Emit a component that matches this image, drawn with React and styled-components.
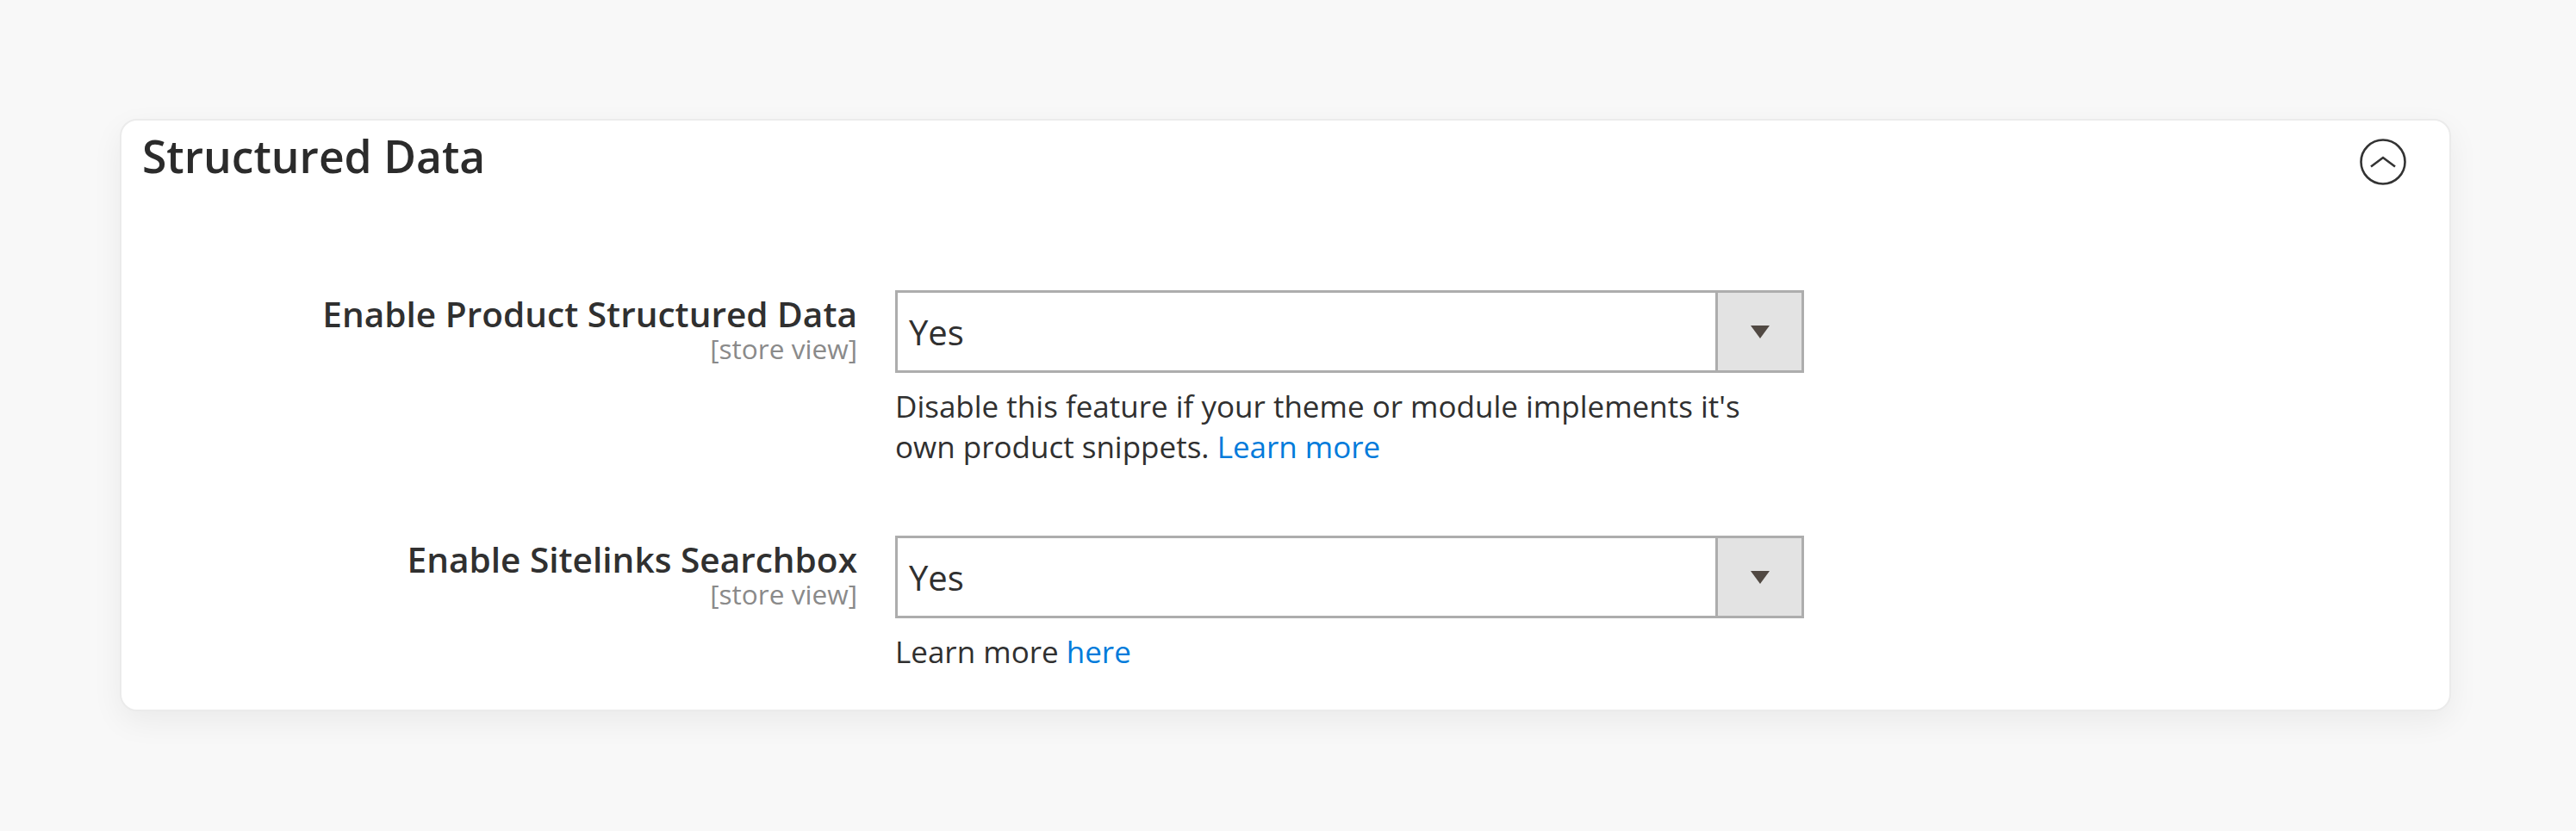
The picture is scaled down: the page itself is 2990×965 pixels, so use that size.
import styled, { createGlobalStyle } from 'styled-components';

const GlobalStyle = createGlobalStyle`
  html, body {
    margin: 0;
    padding: 0;
    background: #f8f8f8;
    font-family: "Open Sans", "Liberation Sans", sans-serif;
    color: #303030;
  }
`;

const Page = styled.div`
  width: 2990px;
  height: 965px;
  box-sizing: border-box;
  padding: 138px 0 0 139px;
`;

const Card = styled.section`
  width: 2706px;
  box-sizing: border-box;
  background: #fff;
  border: 2px solid #ebebeb;
  border-radius: 20px;
  box-shadow: 0 12px 36px rgba(0, 0, 0, 0.06);
  padding-bottom: 44px;
`;

const Header = styled.div`
  display: flex;
  justify-content: space-between;
  align-items: flex-start;
  padding: 12px 50px 0 24px;
`;

const Title = styled.h2`
  margin: 0;
  font-size: 51.6px;
  line-height: 59px;
  font-weight: 600;
  color: #2b2b2b;
`;

const ToggleButton = styled.button`
  margin-top: 9px;
  width: 54px;
  height: 54px;
  padding: 0;
  border: 0;
  background: none;
  display: flex;
  align-items: center;
  justify-content: center;
`;

const Form = styled.div`
  display: grid;
  grid-template-columns: 854px 1055px;
  column-gap: 44px;
  row-gap: 80px;
  padding-top: 122px;
`;

const Label = styled.div`
  text-align: right;
  padding-top: 4px;
`;

const LabelText = styled.div`
  font-size: 40.6px;
  line-height: 48px;
  font-weight: 600;
  color: #303030;
`;

const Scope = styled.div`
  font-size: 31.6px;
  line-height: 36px;
  color: #8a8a8a;
  margin-top: -2px;
`;

const Control = styled.div`
  display: flex;
  flex-direction: column;
`;

const Select = styled.div`
  display: flex;
  height: 96px;
  box-sizing: border-box;
  border: 3px solid #adadad;
  background: #fff;
`;

const Value = styled.div`
  flex: 1;
  display: flex;
  align-items: center;
  padding-left: 13px;
  font-size: 40px;
  color: #303030;
`;

const Arrow = styled.div`
  width: 97px;
  border-left: 3px solid #adadad;
  background: #e3e3e3;
  display: flex;
  align-items: center;
  justify-content: center;

  &::after {
    content: '';
    width: 0;
    height: 0;
    border-left: 11px solid transparent;
    border-right: 11px solid transparent;
    border-top: 15px solid #514943;
  }
`;

const Note = styled.p`
  margin: 15px 0 0;
  font-size: 35px;
  line-height: 47px;
  color: #303030;
`;

const Link = styled.a`
  color: #007bdb;
  text-decoration: none;
`;

const fields = [
  {
    label: 'Enable Product Structured Data',
    note: (
      <>
        Disable this feature if your theme or module implements it's own product snippets.{' '}
        <Link href="#">Learn more</Link>
      </>
    ),
  },
  {
    label: 'Enable Sitelinks Searchbox',
    note: (
      <>
        Learn more <Link href="#">here</Link>
      </>
    ),
  },
];

const App = () => {
  return (
    <Page>
      <GlobalStyle />
      <Card>
        <Header>
          <Title>Structured Data</Title>
          <ToggleButton aria-label="Collapse">
            <svg width="54" height="54" viewBox="0 0 54 54" fill="none">
              <circle cx="27" cy="27" r="25.5" stroke="#333" strokeWidth="2.6" />
              <polyline
                points="13,32.5 27,22 41,32.5"
                stroke="#333"
                strokeWidth="2.6"
                strokeLinejoin="miter"
              />
            </svg>
          </ToggleButton>
        </Header>
        <Form>
          {fields.map((f) => (
            <>
              <Label key={f.label + '-l'}>
                <LabelText>{f.label}</LabelText>
                <Scope>[store view]</Scope>
              </Label>
              <Control key={f.label + '-c'}>
                <Select>
                  <Value>Yes</Value>
                  <Arrow />
                </Select>
                <Note>{f.note}</Note>
              </Control>
            </>
          ))}
        </Form>
      </Card>
    </Page>
  );
};

export default App;
